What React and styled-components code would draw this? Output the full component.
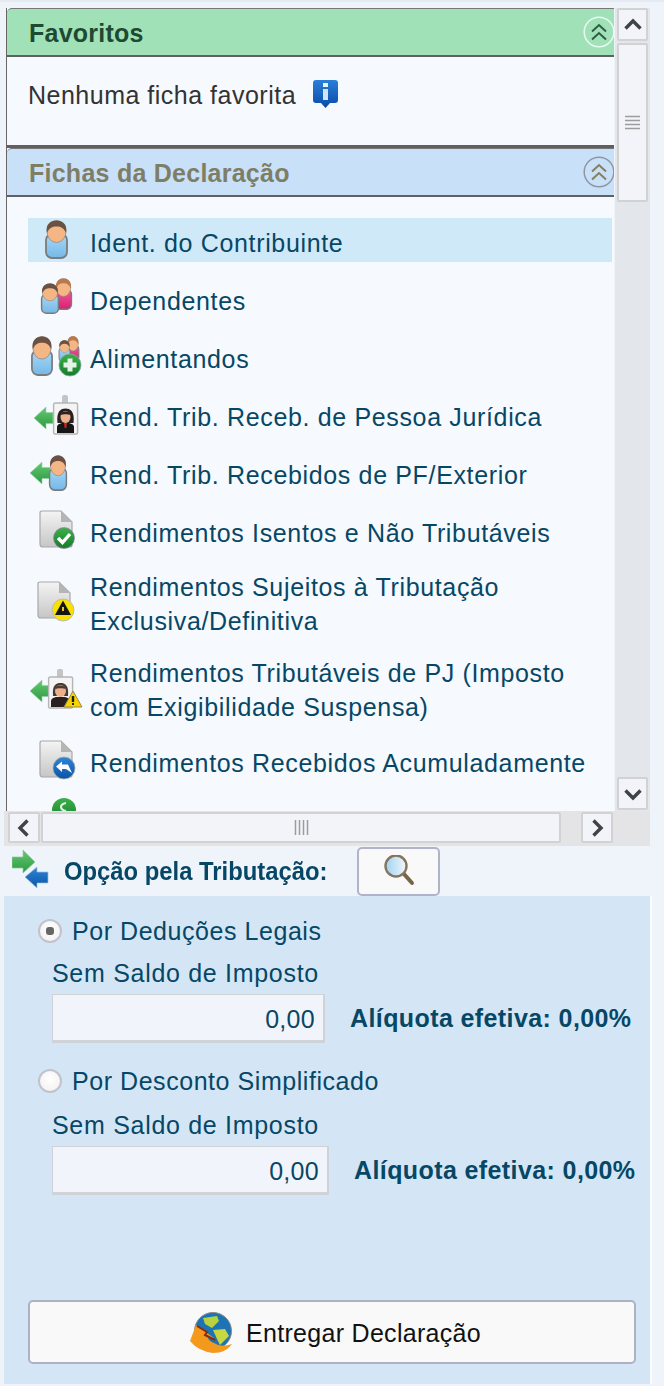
import React from "react";
import styled, { createGlobalStyle } from "styled-components";

const Global = createGlobalStyle`
  html, body { margin: 0; padding: 0; background: #eff4fb; }
  * { box-sizing: border-box; }
  body { font-family: "Liberation Sans", Arial, sans-serif; }
`;

const Page = styled.div`
  width: 664px; height: 1386px; overflow: hidden; background: #eff4fb;
  border-top: 2px solid #e6ebf3; display: flex; flex-direction: column;
`;
const Pane = styled.div`
  margin: 6px 0 0 6px; width: 644px; display: grid;
  grid-template-columns: 608px 36px; grid-template-rows: 803px;
`;
const Viewport = styled.div`
  overflow: hidden; border-left: 1px solid #666; display: flex; flex-direction: column; background: #f6f9fd;
`;
const Header = styled.div`
  height: 49px; flex: none; display: flex; align-items: center; justify-content: space-between;
  background: ${p => p.$bg}; color: ${p => p.$fg};
  border-top: 1px solid #777; border-bottom: 2px solid #606060; border-top-left-radius: 5px;
  padding: 3px 0 0 22px; font-size: 25px; font-weight: bold; letter-spacing: .25px;
`;
const Collapse = styled.svg`width: 32px; height: 32px; flex: none; margin-right: -1px; margin-top: -4px;`;
const FavBody = styled.div`
  height: 91px; flex: none; border-bottom: 3px solid #606060; padding: 24px 0 0 21px;
  display: flex; align-items: flex-start; gap: 16px; font-size: 25px; color: #333; letter-spacing: .5px;
`;
const Info = styled.svg`width: 27px; height: 30px; flex: none; margin-top: -2px; filter: blur(.3px);`;
const List = styled.div`
  flex: 1; min-height: 0; overflow: hidden; padding: 21px 0 0 21px; display: flex; flex-direction: column; gap: 14px;
`;
const Row = styled.div`
  flex: none; width: 584px; height: ${p => (p.$tall ? 72 : 44)}px; padding-top: ${p => (p.$tall ? 4 : 6)}px;
  display: flex; align-items: center;
  background: ${p => (p.$selected ? "#d0e9f8" : "transparent")};
  color: #074766; font-size: 25px; line-height: 34px; letter-spacing: .65px;
`;
const RowIcon = styled.svg`width: 62px; height: 44px; flex: none; overflow: visible; filter: blur(.35px);`;
const RowText = styled.div`white-space: pre-line;`;

const VBar = styled.div`
  margin-left: 1px; width: 35px; background: #e3e6ea; display: flex; flex-direction: column; align-items: flex-start; padding: 0 0 1px 2px;
`;
const ScrollBtn = styled.div`
  width: ${p => p.$w}px; height: ${p => p.$h}px; flex: none; background: #f2f4f9;
  border: 2px solid #d2d2d2; border-radius: 2px; display: flex; align-items: center; justify-content: center;
`;
const VThumb = styled(ScrollBtn)`margin-top: 2px;`;
const VSpace = styled.div`flex: 1;`;
const HBar = styled.div`
  margin-left: 4px; width: 646px; height: 35px; flex: none; background: #e4e4e6; display: flex; align-items: center; padding: 0 0 2px 4px;
`;
const HThumb = styled(ScrollBtn)`margin: 0 20px 0 1px;`;
const Glyph = styled.svg`display: block; flex: none;`;

const OptionHead = styled.div`
  height: 50px; flex: none; display: flex; align-items: center; padding-left: 12px;
  font-size: 25px; font-weight: bold; color: #074766;
`;
const OptionIcon = styled.svg`width: 38px; height: 42px; flex: none; margin-right: 14px; filter: blur(.3px);`;
const OptionTitle = styled.span`
  transform: scaleX(.953); transform-origin: left; width: 280px; flex: none; margin: 0 13px 0 0; white-space: nowrap;
`;
const SearchBtn = styled.div`
  width: 83px; height: 49px; background: #f9f9f9; border: 2px solid #b1b4c8; border-radius: 5px;
  display: flex; align-items: center; justify-content: center;
`;
const Panel = styled.div`
  margin-left: 4px; width: 646px; height: 488px; flex: none; background: #d4e6f5; box-shadow: 2px 0 0 #fafcff;
  padding: 23px 0 0 34px; color: #074766; display: flex; flex-direction: column;
`;
const RadioRow = styled.div`
  height: 24px; display: flex; align-items: center; gap: 10px; font-size: 25px; letter-spacing: .55px; white-space: nowrap;
  margin-top: ${p => p.$top}px;
`;
const Radio = styled.div`
  width: 24px; height: 24px; border-radius: 50%; background: radial-gradient(circle at 50% 40%, #ffffff, #f4f4f4 70%);
  border: 2px solid #c2c2cc; display: flex; align-items: center; justify-content: center;
  &::after { content: ""; display: ${p => (p.$on ? "block" : "none")}; width: 8px; height: 8px; border-radius: 3px; background: #666; }
`;
const Caption = styled.div`font-size: 25px; line-height: 30px; margin: ${p => p.$top}px 0 6px 14px; letter-spacing: .7px;`;
const ValueRow = styled.div`display: flex; align-items: center; margin-left: 14px; gap: 25px;`;
const Field = styled.div`
  width: ${p => p.$w}px; height: 49px; background: #f1f5fb; border: 1px solid #cfd2d6; border-right-width: 2px; border-bottom-width: 3px;
  font-size: 25px; text-align: right; padding: 6px 8px 0 0; line-height: 36px; letter-spacing: .3px;
`;
const Rate = styled.div`font-size: 25px; font-weight: bold; white-space: nowrap; letter-spacing: .4px;`;
const Submit = styled.div`
  margin: auto 0 20px -10px; width: 608px; height: 64px; background: #f9f9f9; border: 2px solid #aeb1c4; border-radius: 5px;
  padding: 2px 0 0 7px; display: flex; align-items: center; justify-content: center; gap: 12px; color: #111; font-size: 25px; letter-spacing: .3px;
`;
const GlobeIcon = styled.svg`width: 44px; height: 42px; flex: none; filter: blur(.3px);`;

const Grad = ({ id, a, b, h }) => (
  <linearGradient id={id} x1="0" y1="0" x2={h ? 1 : 0} y2={h ? 0 : 1}>
    <stop offset="0" stopColor={a} /><stop offset="1" stopColor={b} />
  </linearGradient>
);
const Defs = () => (
  <defs>
    <Grad id="gBlue" a="#a9d8f6" b="#74b8e8" />
    <Grad id="gPink" a="#f05c9c" b="#d81f72" />
    <Grad id="gDoc" a="#f4f4f4" b="#c6c6c6" />
    <Grad id="gArrow" a="#66c873" b="#2a9a40" />
    <Grad id="gBArrow" a="#2f86d6" b="#0b54a8" />
    <Grad id="gRound" a="#3db04a" b="#137d2a" />
    <Grad id="gLens" a="#9fd3f2" b="#f4f7f8" h />
    <Grad id="gInfo" a="#2a7fd8" b="#0a4aa8" />
  </defs>
);

const Person = ({ x, y, w, h, body = "url(#gBlue)", hair = "#6a5144" }) => (
  <g transform={`translate(${x} ${y}) scale(${w / 25} ${h / 39})`}>
    <rect x="2" y="14" width="21" height="24" rx="6" fill={body} stroke="#7b7b7b" strokeWidth="1.800" />
    <ellipse cx="12.500" cy="11.500" rx="9.500" ry="11" fill="#f3b684" stroke="#8f8a86" strokeWidth=".8" />
    <path d="M3 13C1 4 7 .5 12.500 .5S24 4 22 13C20 8 17 6.500 12.500 6.500S5 8 3 13Z" fill={hair} />
  </g>
);
const Doc = ({ x, y }) => (
  <g transform={`translate(${x} ${y})`}>
    <path d="M2 0H21L32 11V34Q32 36 30 36H3Q0 36 0 33V2Q0 0 2 0Z" fill="url(#gDoc)" stroke="#a8a8a8" strokeWidth="1.200" />
    <path d="M21 0V11H32Z" fill="#b5b5b5" />
  </g>
);
const LeftArrow = ({ x, y, w = 20 }) => (
  <path d={`M${x} ${y}L${x + 12} ${y - 11}V${y - 5.500}H${x + w}V${y + 5.500}H${x + 12}V${y + 11}Z`} fill="url(#gArrow)" stroke="#9ad0a8" strokeWidth=".6" />
);
const Badge = ({ x, y, children }) => (
  <g transform={`translate(${x} ${y})`}>
    <rect x="9" y="-7" width="6" height="11" rx="2" fill="#c4c4c4" />
    <rect x="0.6" y="1" width="24" height="31" rx="1.500" fill="#f4f4f4" stroke="#b5b5b5" strokeWidth="1.400" />
    {children}
  </g>
);

const icons = {
  ident: <Person x={16} y={-1} w={25} h={39} />,
  dep: <>
    <Person x={26} y={-1} w={19} h={32} body="url(#gPink)" hair="#b9794a" />
    <Person x={12} y={4} w={20} h={31} />
  </>,
  alim: <>
    <Person x={2} y={-1} w={24} h={40} />
    <Person x={38} y={-1} w={14} h={26} body="url(#gPink)" hair="#b9794a" />
    <Person x={30} y={3} w={13} h={22} />
    <circle cx="42" cy="28" r="11" fill="url(#gRound)" stroke="#8a9" strokeWidth=".8" />
    <path d="M39.500 21.500h5v4h4v5h-4v4h-5v-4h-4v-5h4z" fill="#e6f2e6" />
  </>,
  pj: <>
    <LeftArrow x={6} y={23} w={19} />
    <Badge x={25} y={7}>
      <path d="M4.500 21C3 9 8 6.500 12.500 6.500S22 9 20.500 21Z" fill="#2a2020" />
      <ellipse cx="12.500" cy="15" rx="5" ry="6" fill="#eeb08a" />
      <path d="M7.500 13C8 10 10 9.500 12.500 9.500S17 10 17.500 13C15 12 10 12 7.500 13Z" fill="#2a2020" />
      <path d="M4 31V25Q4 22 9 21H16Q21 22 21 25V31Z" fill="#161616" />
      <path d="M11 21h3l-.6 5h-1.800z" fill="#c22" />
    </Badge>
  </>,
  pf: <>
    <LeftArrow x={2} y={20} w={20} />
    <Person x={20} y={2} w={20} h={36} />
  </>,
  isentos: <>
    <Doc x={12} y={0} />
    <circle cx="36" cy="27" r="10.500" fill="url(#gRound)" stroke="#a7a" strokeWidth=".7" />
    <path d="M30 27l4.500 4.500 7.500-8.500" fill="none" stroke="#fff" strokeWidth="3.400" />
  </>,
  sujeitos: <>
    <Doc x={10} y={0} />
    <circle cx="35" cy="28" r="11" fill="#f8e000" stroke="#bbb" strokeWidth="1" />
    <path d="M35 18.500L43 33H27Z" fill="#151515" />
    <rect x="34" y="25" width="2" height="4" fill="#e0cc10" />
  </>,
  susp: <>
    <LeftArrow x={2} y={23} w={20} />
    <Badge x={20} y={8}>
      <path d="M5 20C4 9 8 7 12.500 7S21 9 20 20Z" fill="#4a3a32" />
      <ellipse cx="12.500" cy="15" rx="5.500" ry="6" fill="#eeb08a" />
      <path d="M7 13C8 10 10 9.500 12.500 9.500S17 10 18 13C15 12 10 12 7 13Z" fill="#4a3a32" />
      <path d="M3 31V25Q3 22 8 21H17Q22 22 22 25V31Z" fill="#2a2020" />
    </Badge>
    <path d="M45 23L54 39H36Z" fill="#f7d400" stroke="#9a8a40" strokeWidth="1" strokeLinejoin="round" />
    <path d="M45 28v6" stroke="#222" strokeWidth="2.400" />
    <rect x="44" y="35" width="2" height="2" fill="#222" />
  </>,
  acum: <>
    <Doc x={12} y={0} />
    <circle cx="36" cy="27" r="11" fill="url(#gBArrow)" stroke="#aaa" strokeWidth=".8" />
    <path d="M28 25.500L34 20.500V23.500H40L44 32 38 28H34V31Z" fill="#fff" />
  </>,
  next: <>
    <circle cx="36" cy="11" r="12" fill="url(#gRound)" />
    <path d="M38 4Q33 5 33 8T38 12" fill="none" stroke="#dff0df" strokeWidth="2.200" />
  </>,
};

const rows = [
  ["ident", "Ident. do Contribuinte", true],
  ["dep", "Dependentes"],
  ["alim", "Alimentandos"],
  ["pj", "Rend. Trib. Receb. de Pessoa Jurídica"],
  ["pf", "Rend. Trib. Recebidos de PF/Exterior"],
  ["isentos", "Rendimentos Isentos e Não Tributáveis"],
  ["sujeitos", "Rendimentos Sujeitos à Tributação\nExclusiva/Definitiva", false, true],
  ["susp", "Rendimentos Tributáveis de PJ (Imposto\ncom Exigibilidade Suspensa)", false, true],
  ["acum", "Rendimentos Recebidos Acumuladamente"],
  ["next", ""],
];

const CollapseIcon = ({ ring, color }) => (
  <Collapse viewBox="0 0 32 32">
    <circle cx="16" cy="16" r="14.800" fill="none" stroke={ring} strokeWidth="1.500" />
    <path d="M9 15.500L16 9l7 6.500M9 23.500L16 17l7 6.500" fill="none" stroke={color} strokeWidth="2" />
  </Collapse>
);
const Chevron = ({ dir }) => {
  const rot = { up: 0, down: 180, left: 270, right: 90 }[dir];
  return (
    <Glyph width="18" height="18" viewBox="0 0 18 18">
      <path transform={`rotate(${rot} 9 9)`} d="M1.500 12.500L9 5l7.500 7.500" fill="none" stroke="#3d4349" strokeWidth="3.400" />
    </Glyph>
  );
};
const Grip = ({ vertical }) => (
  <Glyph width="15" height="15" viewBox="0 0 15 15">
    <path d={vertical ? "M0 1.500H15M0 5.500H15M0 9.500H15M0 13.500H15" : "M1.500 0V15M5.500 0V15M9.500 0V15M13.500 0V15"} stroke="#9c9c9c" strokeWidth="1.500" />
  </Glyph>
);

export default function App() {
  return (
    <Page>
      <Global />
      <Pane>
        <Viewport>
          <Header $bg="#a0e1b8" $fg="#1d4a30">Favoritos<CollapseIcon ring="#e8fbf0" color="#2f5c44" /></Header>
          <FavBody>
            Nenhuma ficha favorita
            <Info viewBox="0 0 27 30">
              <Defs />
              <path d="M4 1H23Q26 1 26 4V21Q26 24 23 24H18L13.500 29 9 24H4Q1 24 1 21V4Q1 1 4 1Z" fill="url(#gInfo)" />
              <rect x="11" y="4" width="5" height="4" fill="#e8f2ff" />
              <rect x="11" y="10" width="5" height="11" fill="#cfe3fa" />
            </Info>
          </FavBody>
          <Header $bg="#c9e0f9" $fg="#7e7e66">Fichas da Declaração<CollapseIcon ring="#8d97a3" color="#857f5e" /></Header>
          <List>
            {rows.map(([icon, text, selected, tall]) => (
              <Row key={icon} $selected={selected} $tall={tall}>
                <RowIcon viewBox="0 0 62 44"><Defs />{icons[icon]}</RowIcon>
                <RowText>{text}</RowText>
              </Row>
            ))}
          </List>
        </Viewport>
        <VBar>
          <ScrollBtn $w={31} $h={33}><Chevron dir="up" /></ScrollBtn>
          <VThumb $w={31} $h={159}><Grip vertical /></VThumb>
          <VSpace />
          <ScrollBtn $w={31} $h={33}><Chevron dir="down" /></ScrollBtn>
        </VBar>
      </Pane>
      <HBar>
        <ScrollBtn $w={32} $h={31}><Chevron dir="left" /></ScrollBtn>
        <HThumb $w={520} $h={31}><Grip /></HThumb>
        <ScrollBtn $w={32} $h={31}><Chevron dir="right" /></ScrollBtn>
      </HBar>
      <OptionHead>
        <OptionIcon viewBox="0 0 38 42">
          <Defs />
          <path d="M0 7H11V0L23 12 11 23V18H0Z" fill="url(#gArrow)" stroke="#8fc79c" strokeWidth=".7" />
          <path d="M13 27L25 17V22H36V33H25V38Z" fill="url(#gBArrow)" stroke="#9dbfe0" strokeWidth=".7" />
        </OptionIcon>
        <OptionTitle>Opção pela Tributação:</OptionTitle>
        <SearchBtn>
          <Glyph width="32" height="32" viewBox="0 0 32 32">
            <Defs />
            <path d="M21 19L29 28" stroke="#7a6448" strokeWidth="4" strokeLinecap="round" />
            <circle cx="13" cy="11" r="10.500" fill="url(#gLens)" stroke="#857560" strokeWidth="2.400" />
          </Glyph>
        </SearchBtn>
      </OptionHead>
      <Panel>
        <RadioRow $top={0}><Radio $on />Por Deduções Legais</RadioRow>
        <Caption $top={15}>Sem Saldo de Imposto</Caption>
        <ValueRow>
          <Field $w={273}>0,00</Field>
          <Rate>Alíquota efetiva: 0,00%</Rate>
        </ValueRow>
        <RadioRow $top={26}><Radio />Por Desconto Simplificado</RadioRow>
        <Caption $top={17}>Sem Saldo de Imposto</Caption>
        <ValueRow>
          <Field $w={277}>0,00</Field>
          <Rate>Alíquota efetiva: 0,00%</Rate>
        </ValueRow>
        <Submit>
          <GlobeIcon viewBox="0 0 44 42">
            <circle cx="23" cy="19" r="18.500" fill="#1c74b4" stroke="#8a8a8a" strokeWidth="1" />
            <path d="M13 6L27 4 29 9 22 16 15 12Z" fill="#b8d23e" />
            <path d="M23 18L35 17 39 24 30 33 27 27Z" fill="#c8d640" />
            <path d="M6 13L0 29Q8 39 23 41 36 41 42 32 31 36 24 31 19 29 18 26L24 26Z" fill="#f39a1d" />
            <path d="M7 14L17 20 15 23 25 28" fill="none" stroke="#8a2a10" strokeWidth="2" />
          </GlobeIcon>
          Entregar Declaração
        </Submit>
      </Panel>
    </Page>
  );
}
